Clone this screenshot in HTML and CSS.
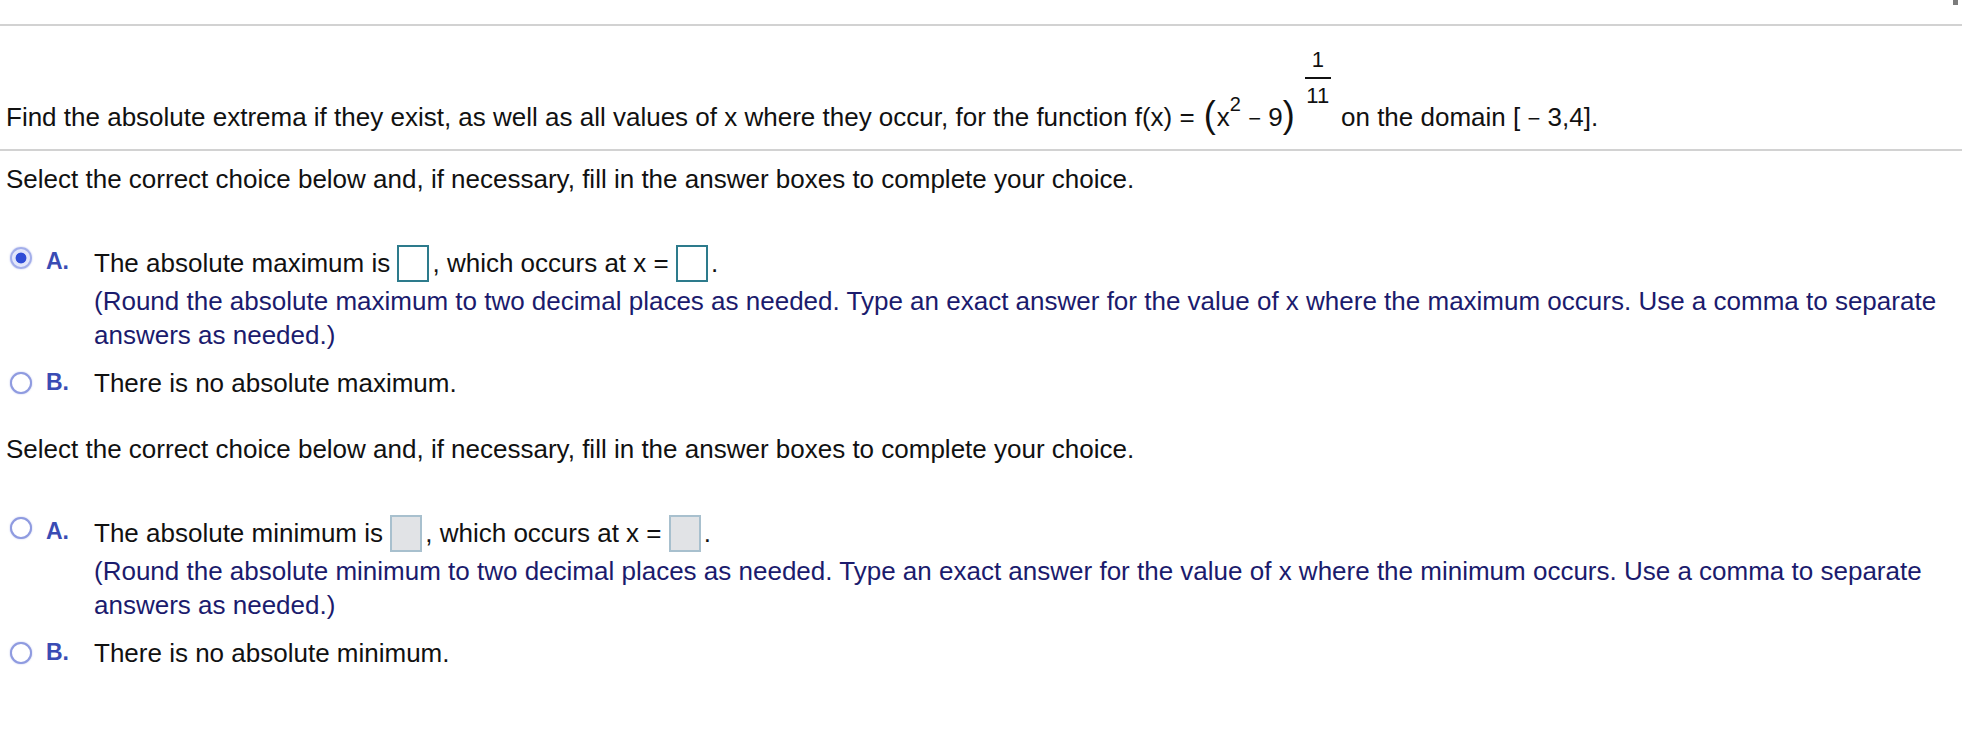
FILE: index.html
```html
<!DOCTYPE html>
<html>
<head>
<meta charset="utf-8">
<link rel="stylesheet" href="styles.css">
</head>
<body>
<div class="scroll-mark"></div>
<div class="top-rule"></div>
<div class="question">Find the absolute extrema if they exist, as well as all values of x where they occur, for the function f(x) = <span class="math"><span class="paren">(</span>x<span class="sup">2</span> <span class="op">−</span> 9<span class="paren">)</span><span class="frac"><span class="num">1</span><span class="den">11</span></span></span> on the domain [ <span class="op">−</span> 3,4].</div>

<div class="prompt">Select the correct choice below and, if necessary, fill in the answer boxes to complete your choice.</div>
<div class="choices">
  <div class="choice has-box">
    <span class="radio checked"></span>
    <span class="letter">A.</span>
    <div class="body">
      <div class="line">The absolute maximum is <span class="box active"></span>, which occurs at x = <span class="box active"></span>.</div>
      <div class="note">(Round the absolute maximum to two decimal places as needed. Type an exact answer for the value of x where the maximum occurs. Use a comma to separate answers as needed.)</div>
    </div>
  </div>
  <div class="choice">
    <span class="radio"></span>
    <span class="letter">B.</span>
    <div class="body">
      <div class="line">There is no absolute maximum.</div>
    </div>
  </div>
</div>

<div class="prompt second">Select the correct choice below and, if necessary, fill in the answer boxes to complete your choice.</div>
<div class="choices">
  <div class="choice has-box">
    <span class="radio"></span>
    <span class="letter">A.</span>
    <div class="body">
      <div class="line">The absolute minimum is <span class="box"></span>, which occurs at x = <span class="box"></span>.</div>
      <div class="note">(Round the absolute minimum to two decimal places as needed. Type an exact answer for the value of x where the minimum occurs. Use a comma to separate answers as needed.)</div>
    </div>
  </div>
  <div class="choice">
    <span class="radio"></span>
    <span class="letter">B.</span>
    <div class="body">
      <div class="line">There is no absolute minimum.</div>
    </div>
  </div>
</div>
</body>
</html>
```

FILE: styles.css
```css
* { box-sizing: border-box; }

html, body {
  margin: 0;
  padding: 0;
  background: #ffffff;
}

body {
  font-family: "Liberation Sans", Arial, sans-serif;
  font-size: 26px;
  line-height: 34px;
  color: #111111;
  width: 1962px;
  height: 732px;
  overflow: hidden;
}

.scroll-mark {
  position: absolute;
  top: 0;
  left: 1953px;
  width: 5px;
  height: 5px;
  background: #7c7c7c;
}

.top-rule {
  height: 26px;
  border-bottom: 2px solid #d2d2d2;
}

.question {
  padding: 24px 0 13px 6px;
  border-bottom: 2px solid #d2d2d2;
  white-space: nowrap;
}

.math {
  white-space: nowrap;
}

.paren {
  font-size: 36px;
  font-weight: 300;
  vertical-align: -1px;
}

.paren:first-child {
  margin-left: 2px;
  margin-right: 1px;
}

.sup {
  font-size: 20px;
  line-height: 19px;
  vertical-align: 15px;
}

.op {
  font-size: 22px;
}

.frac {
  display: inline-flex;
  flex-direction: column;
  align-items: center;
  vertical-align: 59px;
  font-size: 22px;
  line-height: 20px;
  margin: 0 3px 0 10px;
}

.frac .num {
  display: block;
  width: 26px;
  text-align: center;
  padding-bottom: 7px;
  border-bottom: 2px solid #111;
}

.frac .den {
  display: block;
  margin-top: 7px;
}

.prompt {
  margin-top: 11px;
  padding-left: 6px;
}

.prompt.second {
  margin-top: 32px;
}

.choices {
  margin-top: 49px;
  padding-left: 6px;
  display: flex;
  flex-direction: column;
  gap: 14px;
}

.choice {
  display: grid;
  grid-template-columns: 40px 48px 1fr;
  align-items: start;
}

.radio {
  width: 22px;
  height: 22px;
  margin: 6px 0 0 4px;
  border-radius: 50%;
  border: 2.5px solid #8f9be0;
  background: #ffffff;
  box-shadow: 0 0 1.5px rgba(120, 135, 220, 0.7);
}

.choice.has-box .radio {
  margin-top: 2px;
}

.radio.checked {
  border-color: #a3aeea;
  background: radial-gradient(circle, #2f4cd6 0, #2f4cd6 5px, #dfe3fa 5.8px, #eef0fc 100%);
}

.letter {
  font-size: 23px;
  font-weight: bold;
  color: #3a4cb4;
  line-height: 32px;
}

.note {
  color: #1b1b6d;
  margin-top: 2px;
  padding-right: 10px;
}

.box {
  display: inline-block;
  width: 32px;
  height: 37px;
  vertical-align: -10px;
  border: 2px solid #a8c0ce;
  background: #e1e3e6;
  margin-right: 3px;
}

.box.active {
  border-color: #2d7b8c;
  background: #ffffff;
}
```
